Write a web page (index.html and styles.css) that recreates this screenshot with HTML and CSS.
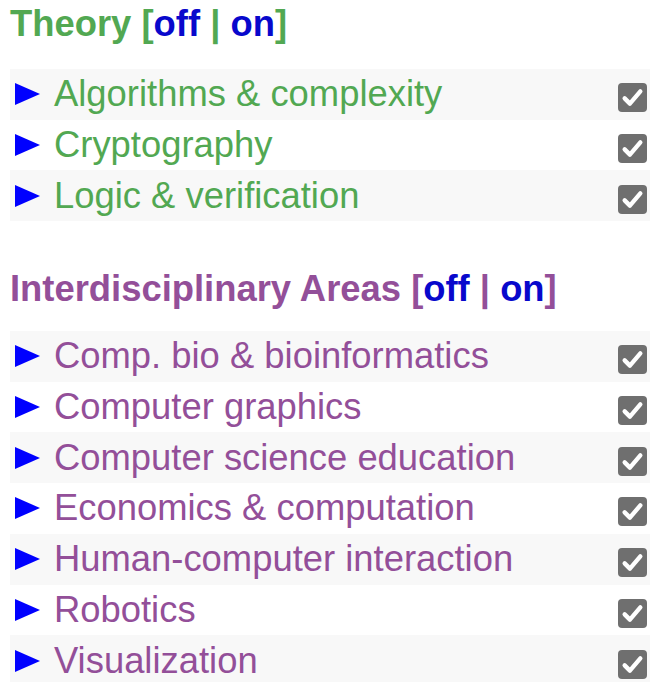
FILE: index.html
```html
<!DOCTYPE html>
<html>
<head>
<meta charset="utf-8">
<link rel="stylesheet" href="styles.css">
</head>
<body>

<!-- theory block -->
<section class="group theory">
  <h2 class="group-title">Theory <span class="toggle">[<a href="#">off</a> | <a href="#">on</a>]</span></h2>
  <ul class="areas">
    <li class="area"><span class="arrow"></span><span class="name">Algorithms &amp; complexity</span><span class="check"><svg viewBox="0 0 20 20"><path d="M4.6 10.6 L8.2 14.2 L15.4 5.8"/></svg></span></li>
    <li class="area"><span class="arrow"></span><span class="name">Cryptography</span><span class="check"><svg viewBox="0 0 20 20"><path d="M4.6 10.6 L8.2 14.2 L15.4 5.8"/></svg></span></li>
    <li class="area"><span class="arrow"></span><span class="name">Logic &amp; verification</span><span class="check"><svg viewBox="0 0 20 20"><path d="M4.6 10.6 L8.2 14.2 L15.4 5.8"/></svg></span></li>
  </ul>
</section>

<!-- interdisciplinary block -->
<section class="group inter">
  <h2 class="group-title">Interdisciplinary Areas <span class="toggle">[<a href="#">off</a> | <a href="#">on</a>]</span></h2>
  <ul class="areas">
    <li class="area"><span class="arrow"></span><span class="name">Comp. bio &amp; bioinformatics</span><span class="check"><svg viewBox="0 0 20 20"><path d="M4.6 10.6 L8.2 14.2 L15.4 5.8"/></svg></span></li>
    <li class="area"><span class="arrow"></span><span class="name">Computer graphics</span><span class="check"><svg viewBox="0 0 20 20"><path d="M4.6 10.6 L8.2 14.2 L15.4 5.8"/></svg></span></li>
    <li class="area"><span class="arrow"></span><span class="name">Computer science education</span><span class="check"><svg viewBox="0 0 20 20"><path d="M4.6 10.6 L8.2 14.2 L15.4 5.8"/></svg></span></li>
    <li class="area"><span class="arrow"></span><span class="name">Economics &amp; computation</span><span class="check"><svg viewBox="0 0 20 20"><path d="M4.6 10.6 L8.2 14.2 L15.4 5.8"/></svg></span></li>
    <li class="area"><span class="arrow"></span><span class="name">Human-computer interaction</span><span class="check"><svg viewBox="0 0 20 20"><path d="M4.6 10.6 L8.2 14.2 L15.4 5.8"/></svg></span></li>
    <li class="area"><span class="arrow"></span><span class="name">Robotics</span><span class="check"><svg viewBox="0 0 20 20"><path d="M4.6 10.6 L8.2 14.2 L15.4 5.8"/></svg></span></li>
    <li class="area"><span class="arrow"></span><span class="name">Visualization</span><span class="check"><svg viewBox="0 0 20 20"><path d="M4.6 10.6 L8.2 14.2 L15.4 5.8"/></svg></span></li>
  </ul>
</section>

</body>
</html>
```

FILE: styles.css
```css
body {
  margin: 0;
  padding: 2px 5px 0 10px;
  font-family: "Liberation Sans", Arial, sans-serif;
  background: #ffffff;
}

/* each area group: a title and its list */
.theory {
  margin-bottom: 46px;
}

.group-title {
  margin: 0 0 23px;
  font-size: 36.4px;
  font-weight: bold;
  line-height: 44px;
}

.inter .group-title {
  margin-bottom: 20px;
}

.theory .group-title,
.theory .name {
  color: #52a852;
}

.inter .group-title,
.inter .name {
  color: #934f99;
}

.toggle a {
  color: #0808cc;
  text-decoration: none;
}

.areas {
  list-style: none;
  margin: 0;
  padding: 0;
}

/* one row per area */
.area {
  display: flex;
  align-items: center;
  height: 50.7px;
  padding: 0 3px 0 5px;
}

.area:nth-child(odd) {
  background-color: #f8f8f8;
}

.arrow {
  width: 0;
  height: 0;
  border-left: 25px solid #0000ff;
  border-top: 11.5px solid transparent;
  border-bottom: 11.5px solid transparent;
  margin-right: 14px;
}

.name {
  font-size: 36.4px;
}

.check {
  margin-left: auto;
  margin-top: 7px;
  width: 29px;
  height: 29px;
  border-radius: 4px;
  background-color: #6f6f6f;
}

.check svg {
  display: block;
  width: 29px;
  height: 29px;
}

.check path {
  fill: none;
  stroke: #ffffff;
  stroke-width: 3;
  stroke-linecap: round;
  stroke-linejoin: round;
}
```
